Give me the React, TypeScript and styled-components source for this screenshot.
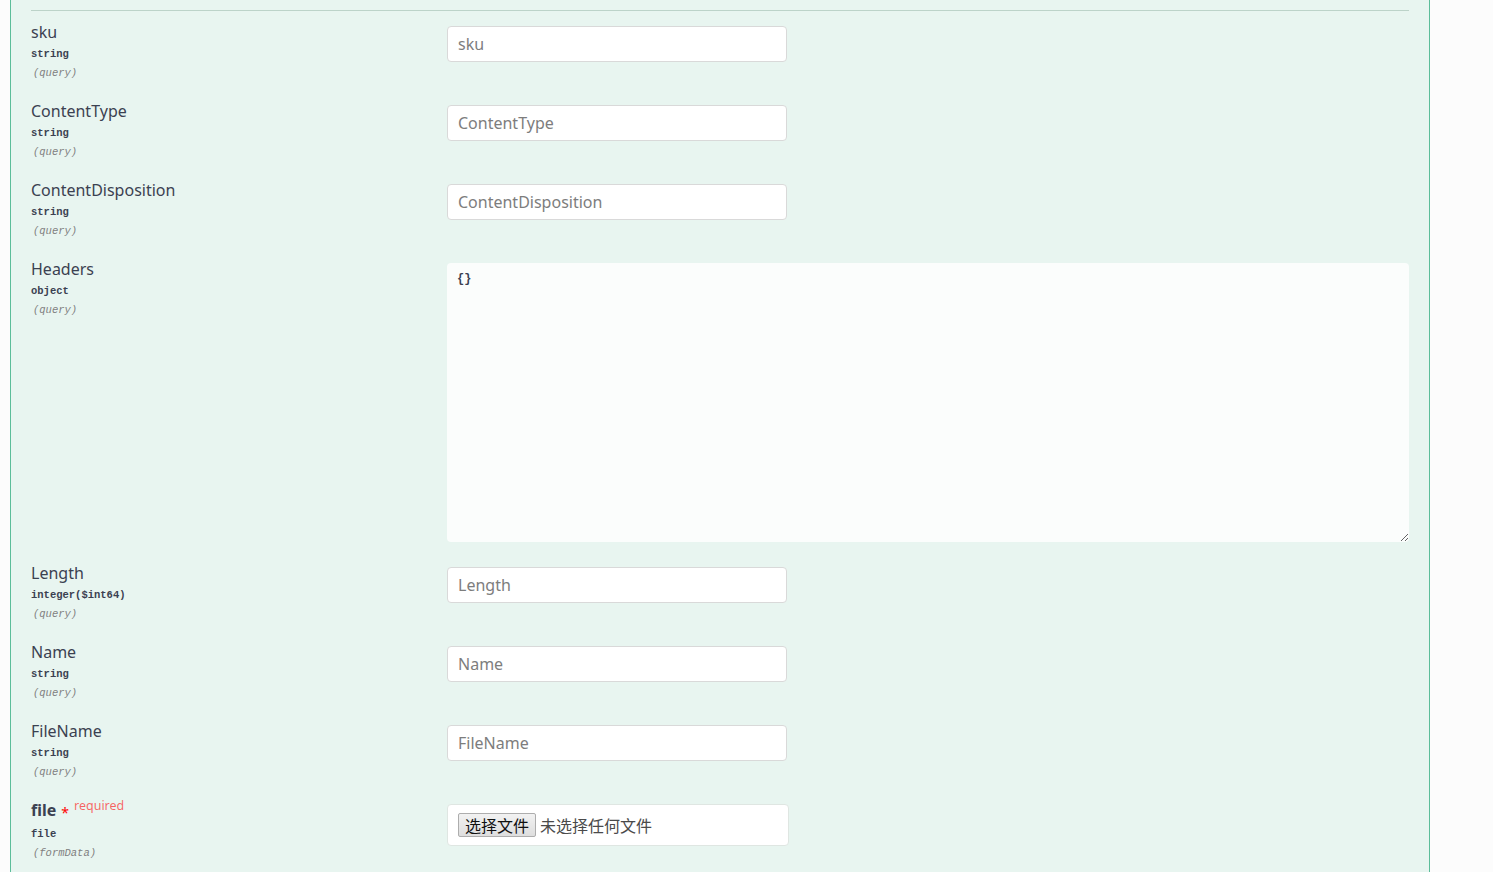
import React from 'react';
import styled, { createGlobalStyle } from 'styled-components';

const GlobalStyle = createGlobalStyle`
  html, body {
    margin: 0;
    padding: 0;
    background: #fcfcfc;
  }
  body {
    font-family: 'Noto Sans', 'Noto Sans CJK SC', sans-serif;
    color: #3b4151;
  }
`;

interface IParam {
  name: string;
  type: string;
  in: string;
  kind: 'text' | 'textarea' | 'file';
  required?: boolean;
  value?: string;
}

const params: IParam[] = [
  { name: 'sku', type: 'string', in: 'query', kind: 'text' },
  { name: 'ContentType', type: 'string', in: 'query', kind: 'text' },
  { name: 'ContentDisposition', type: 'string', in: 'query', kind: 'text' },
  { name: 'Headers', type: 'object', in: 'query', kind: 'textarea', value: '{}' },
  { name: 'Length', type: 'integer($int64)', in: 'query', kind: 'text' },
  { name: 'Name', type: 'string', in: 'query', kind: 'text' },
  { name: 'FileName', type: 'string', in: 'query', kind: 'text' },
  { name: 'file', type: 'file', in: 'formData', kind: 'file', required: true },
];

const Page = styled.div`
  padding-left: 10px;
  width: 1420px;
`;

const Opblock = styled.section`
  background: #e8f5f0;
  border-left: 1px solid #5cbd9a;
  border-right: 1px solid #5cbd9a;
  padding: 0 20px;
  min-height: 872px;
`;

const TableHead = styled.div`
  height: 10px;
  border-bottom: 1px solid #bcd3c9;
`;

const Row = styled.div`
  display: grid;
  grid-template-columns: 416px 1fr;
  align-items: start;
  padding: 10px 0;
`;

const NameCell = styled.div`
  display: flex;
  flex-direction: column;
`;

const ParamName = styled.div<{ $required?: boolean }>`
  font-size: 16px;
  line-height: 22px;
  font-weight: ${(p) => (p.$required ? 700 : 400)};
  color: #3b4151;
  white-space: nowrap;
`;

const Star = styled.span`
  color: red;
  font-size: 14px;
  margin-left: 5px;
  position: relative;
  top: 2px;
  font-weight: 400;
`;

const Required = styled.span`
  color: rgba(255, 0, 0, 0.6);
  font-size: 12.5px;
  font-weight: 400;
  margin-left: 5px;
  position: relative;
  top: -6px;
`;

const ParamType = styled.div`
  font-family: 'Liberation Mono', monospace;
  font-size: 10.5px;
  font-weight: 700;
  line-height: 23px;
  color: #3b4151;
  white-space: nowrap;
`;

const ParamIn = styled.div`
  font-family: 'Liberation Mono', monospace;
  font-size: 10.5px;
  font-style: italic;
  line-height: 14px;
  color: #808080;
  padding-left: 2px;
`;

const TextInput = styled.input`
  box-sizing: border-box;
  display: block;
  width: 340px;
  height: 36px;
  margin: 5px 0;
  padding: 8px 10px;
  border: 1px solid #d9d9d9;
  border-radius: 4px;
  background: #fff;
  font-family: 'Noto Sans', sans-serif;
  font-size: 16px;
  color: #3b4151;
  outline: none;

  &::placeholder {
    color: #7d7d7d;
  }
`;

const TextArea = styled.textarea`
  box-sizing: border-box;
  display: block;
  width: 100%;
  height: 279px;
  margin: 5px 0 0;
  padding: 9px 10px;
  border: none;
  border-radius: 4px;
  background: rgba(255, 255, 255, 0.8);
  font-family: 'Liberation Mono', monospace;
  font-size: 12px;
  font-weight: 700;
  color: #3b4151;
  outline: none;
`;

const FileBox = styled.div`
  box-sizing: border-box;
  display: flex;
  align-items: center;
  gap: 4px;
  width: 342px;
  height: 42px;
  margin: 5px 0;
  padding: 8px 10px;
  border: 1px solid #dfe6e2;
  border-radius: 4px;
  background: #fff;
`;

const FileButton = styled.button`
  box-sizing: border-box;
  height: 24px;
  padding: 0 6px;
  border: 1px solid #adadad;
  border-radius: 2px;
  background: linear-gradient(#f2f2f2, #dedede);
  font-family: 'Noto Sans CJK SC', sans-serif;
  font-size: 16px;
  line-height: 22px;
  color: #111;
`;

const FileLabel = styled.span`
  font-family: 'Noto Sans CJK SC', sans-serif;
  font-size: 16px;
  color: #4a4a4a;
`;

const Param: React.FC<{ param: IParam }> = ({ param }) => (
  <Row>
    <NameCell>
      <ParamName $required={param.required}>
        {param.name}
        {param.required && (
          <>
            <Star>*</Star>
            <Required>required</Required>
          </>
        )}
      </ParamName>
      <ParamType>{param.type}</ParamType>
      <ParamIn>({param.in})</ParamIn>
    </NameCell>
    <div>
      {param.kind === 'text' && <TextInput type='text' placeholder={param.name} />}
      {param.kind === 'textarea' && <TextArea defaultValue={param.value} />}
      {param.kind === 'file' && (
        <FileBox>
          <FileButton>选择文件</FileButton>
          <FileLabel>未选择任何文件</FileLabel>
        </FileBox>
      )}
    </div>
  </Row>
);

const App: React.FC = () => (
  <>
    <GlobalStyle />
    <Page>
      <Opblock>
        <TableHead />
        {params.map((p) => (
          <Param key={p.name} param={p} />
        ))}
      </Opblock>
    </Page>
  </>
);

export default App;
